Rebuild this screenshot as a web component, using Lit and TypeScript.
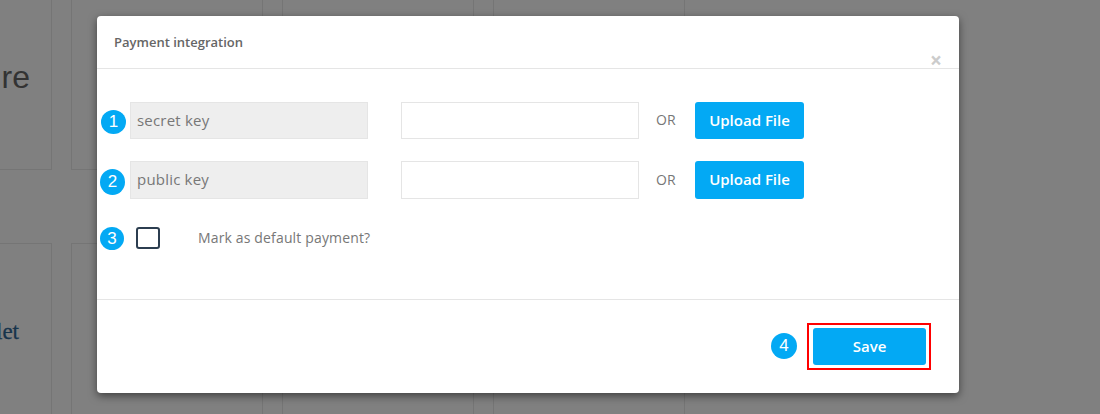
import { html, css, LitElement } from "lit";
import { customElement } from "lit/decorators.js";

@customElement("app-root")
export class AppRoot extends LitElement {
  static styles = css`
    :host {
      display: block;
      position: relative;
      width: 1100px;
      height: 414px;
      overflow: hidden;
      background: #808080;
      font-family: "Open Sans", sans-serif;
      color: #777;
    }

    /* page behind the overlay */
    .page {
      position: absolute;
      inset: 0;
      display: grid;
      grid-template-columns: 192px 192px 192px 192px;
      grid-template-rows: 170px 200px;
      column-gap: 19px;
      row-gap: 73px;
      margin: 0 0 0 -140px;
    }

    .card {
      border: 1px solid #757575;
      border-top: none;
      display: flex;
      align-items: center;
      justify-content: flex-end;
      overflow: hidden;
      white-space: nowrap;
    }

    .card.low {
      border-top: 1px solid #757575;
      border-bottom: none;
    }

    .brand-a {
      font-family: "Liberation Sans", sans-serif;
      font-size: 32px;
      color: #333;
      padding: 0 21px 14px 0;
    }

    .brand-b {
      font-family: "Liberation Serif", serif;
      font-size: 23px;
      color: #17344c;
      -webkit-text-stroke: 0.3px #17344c;
      padding: 0 32px 24px 0;
    }

    .modal {
      position: absolute;
      left: 97px;
      top: 16px;
      box-sizing: border-box;
      width: 862px;
      height: 377px;
      background: #fff;
      border-radius: 4px;
      box-shadow: 0 3px 9px rgba(0, 0, 0, 0.5);
    }

    .header {
      position: relative;
      box-sizing: border-box;
      height: 53px;
      padding: 18px 17px 0;
      border-bottom: 1px solid #e5e5e5;
      font-size: 13px;
      font-weight: 600;
      line-height: 17px;
      color: #666;
    }

    .close {
      position: absolute;
      right: 17px;
      top: 32px;
      font-size: 21px;
      font-weight: 700;
      line-height: 24px;
      color: #ccc;
    }

    .body {
      box-sizing: border-box;
      height: 231px;
      padding: 33px 0 0 33px;
      border-bottom: 1px solid #e5e5e5;
    }

    .row {
      position: relative;
      display: flex;
      align-items: center;
      height: 37px;
      margin-bottom: 22px;
    }

    .row.tall {
      height: 38px;
      margin-bottom: 28px;
    }

    .key {
      box-sizing: border-box;
      width: 238px;
      height: 100%;
      padding: 0 6px 2px;
      border: 1px solid #e5e5e5;
      background: #eee;
      font-size: 15px;
      letter-spacing: 0.2px;
      display: flex;
      align-items: center;
    }

    .value {
      box-sizing: border-box;
      width: 238px;
      height: 100%;
      margin-left: 33px;
      border: 1px solid #e5e5e5;
      background: #fff;
    }

    .or {
      margin: 0 20px 2px 17px;
      font-size: 14px;
      width: 19px;
    }

    .btn {
      border: none;
      border-radius: 3px;
      background: #03a9f4;
      color: #fff;
      font-family: inherit;
      font-size: 15px;
      font-weight: 600;
      padding: 0 0 2px;
    }

    .row .btn {
      width: 109px;
      height: 100%;
    }

    .check-row {
      position: relative;
      display: flex;
      align-items: center;
      height: 22px;
      padding-left: 6px;
      font-size: 14px;
      letter-spacing: 0.15px;
    }

    .check-label {
      margin-bottom: 2px;
    }

    .check {
      box-sizing: border-box;
      width: 24px;
      height: 22px;
      margin-right: 38px;
      border: 2px solid #2c3e50;
      border-radius: 3px;
    }

    .footer {
      display: flex;
      justify-content: flex-end;
      padding: 23px 28px 0 0;
    }

    .marker {
      position: relative;
      box-sizing: border-box;
      width: 124px;
      height: 47px;
      padding: 3px 3px 3px 4px;
      border: 2px solid #f00;
      display: flex;
    }

    .marker .btn {
      flex: 1;
    }

    .badge {
      position: absolute;
      width: 25px;
      height: 25px;
      border-radius: 50%;
      background: #03a9f4;
      color: #fff;
      font-family: "Liberation Sans", sans-serif;
      font-size: 17px;
      line-height: 25px;
      text-align: center;
    }

    .row .badge {
      left: -29px;
      top: 8px;
      height: 24px;
      line-height: 24px;
    }

    .row.tall .badge {
      left: -30px;
      height: 26px;
      line-height: 26px;
    }

    .check-row .badge {
      left: -30px;
      top: 0;
      width: 24px;
      height: 23px;
      line-height: 23px;
    }

    .marker .badge {
      left: -38px;
      top: 8px;
      width: 26px;
      height: 26px;
      line-height: 26px;
    }
  `;

  render() {
    return html`
      <div class="page">
        <div class="card"><span class="brand-a">Secure</span></div>
        <div class="card"></div>
        <div class="card"></div>
        <div class="card"></div>
        <div class="card low"><span class="brand-b">Wallet</span></div>
        <div class="card low"></div>
        <div class="card low"></div>
        <div class="card low"></div>
      </div>
      <div class="modal">
        <div class="header">
          Payment integration
          <span class="close">×</span>
        </div>
        <div class="body">
          <div class="row">
            <span class="badge">1</span>
            <div class="key">secret key</div>
            <div class="value"></div>
            <span class="or">OR</span>
            <button class="btn">Upload File</button>
          </div>
          <div class="row tall">
            <span class="badge">2</span>
            <div class="key">public key</div>
            <div class="value"></div>
            <span class="or">OR</span>
            <button class="btn">Upload File</button>
          </div>
          <div class="check-row">
            <span class="badge">3</span>
            <span class="check"></span>
            <span class="check-label">Mark as default payment?</span>
          </div>
        </div>
        <div class="footer">
          <div class="marker">
            <span class="badge">4</span>
            <button class="btn">Save</button>
          </div>
        </div>
      </div>
    `;
  }
}
